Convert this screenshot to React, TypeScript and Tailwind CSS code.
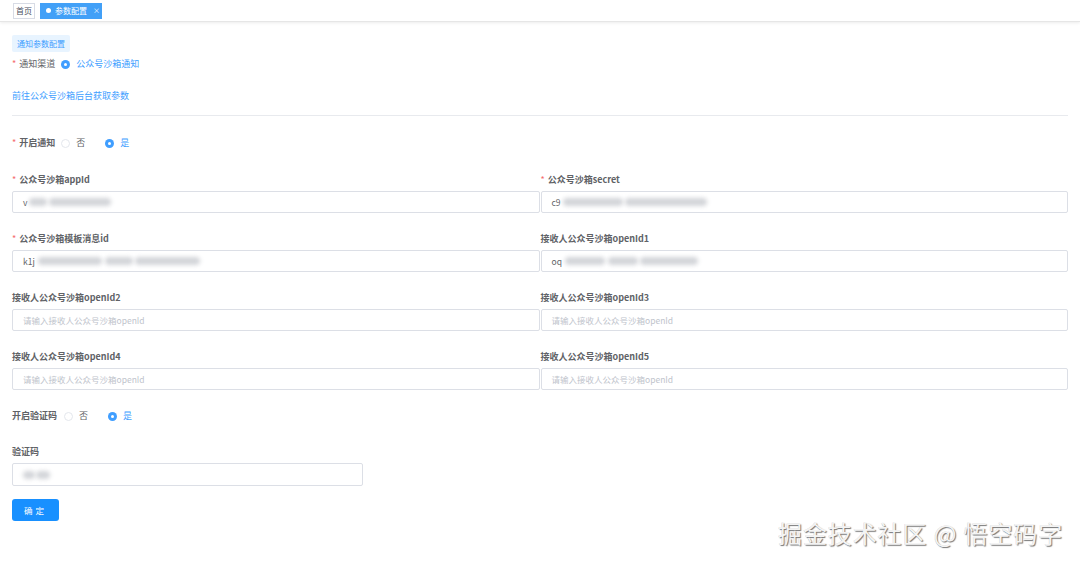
import React from "react";

const font = { fontFamily: '"Noto Sans CJK SC", "Noto Sans", sans-serif' };

function Radio({ checked, label }: { checked?: boolean; label: string }) {
  return (
    <span className="flex items-center">
      {checked ? (
        <span className="flex h-[9px] w-[9px] items-center justify-center rounded-full bg-[#409eff]">
          <span className="h-[3px] w-[3px] rounded-full bg-white" />
        </span>
      ) : (
        <span className="h-[9px] w-[9px] rounded-full border border-[#e4e7ed] bg-white" />
      )}
      <span className={`ml-[6px] text-[9px] ${checked ? "text-[#409eff]" : "text-[#606266]"}`}>{label}</span>
    </span>
  );
}

function Star() {
  return <span className="mr-[3px] text-[9px] text-[#f56c6c]">*</span>;
}

function Blur({ w, ml = 0 }: { w: number; ml?: number }) {
  return (
    <span
      className="inline-block h-[8px] rounded-sm bg-[#d3d5d9] blur-[2px]"
      style={{ width: w, marginLeft: ml }}
    />
  );
}

type Field = {
  label: string;
  required?: boolean;
  prefix?: string;
  blur?: { w: number; ml?: number }[];
  placeholder?: string;
};

function FormField({ f }: { f: Field }) {
  return (
    <div className="flex flex-col">
      <div className="flex h-[12px] items-center">
        {f.required && <Star />}
        <span className="text-[9px] font-bold text-[#606266]">{f.label}</span>
      </div>
      <div className="mt-[5px] flex h-[22px] w-full items-center rounded-[2px] border border-[#dcdfe6] bg-white px-[10px]">
        {f.placeholder ? (
          <span className="text-[8.5px] text-[#c0c4cc]">{f.placeholder}</span>
        ) : (
          <span className="flex items-center">
            <span className="text-[8.5px] text-[#606266]">{f.prefix}</span>
            {f.blur?.map((b, i) => (
              <Blur key={i} w={b.w} ml={b.ml ?? 0} />
            ))}
          </span>
        )}
      </div>
    </div>
  );
}

const ph = "请输入接收人公众号沙箱openId";

const rows: [Field, Field][] = [
  [
    { label: "公众号沙箱appId", required: true, prefix: "v", blur: [{ w: 18, ml: 2 }, { w: 62, ml: 2 }] },
    { label: "公众号沙箱secret", required: true, prefix: "c9", blur: [{ w: 60, ml: 2 }, { w: 82, ml: 2 }] },
  ],
  [
    { label: "公众号沙箱模板消息id", required: true, prefix: "k1j", blur: [{ w: 64, ml: 3 }, { w: 28, ml: 3 }, { w: 65, ml: 2 }] },
    { label: "接收人公众号沙箱openId1", prefix: "oq", blur: [{ w: 40, ml: 3 }, { w: 30, ml: 3 }, { w: 58, ml: 2 }] },
  ],
  [
    { label: "接收人公众号沙箱openId2", placeholder: ph },
    { label: "接收人公众号沙箱openId3", placeholder: ph },
  ],
  [
    { label: "接收人公众号沙箱openId4", placeholder: ph },
    { label: "接收人公众号沙箱openId5", placeholder: ph },
  ],
];

export default function App() {
  return (
    <div className="relative h-[562px] w-[1080px] overflow-hidden bg-white" style={font}>
      {/* tag bar */}
      <div className="flex h-[22px] items-center gap-[5px] border-b border-[#e6e6e6] bg-white pl-[13px] shadow-[0_1px_3px_rgba(0,0,0,0.08)]">
        <div className="flex h-[16px] w-[22px] items-center justify-center border border-[#d8dce5] text-[8px] text-[#495060]">
          首页
        </div>
        <div className="flex h-[16px] w-[62px] items-center bg-[#42a0f7] pl-[6px] text-[8px] text-white">
          <span className="h-[5px] w-[5px] rounded-full bg-white" />
          <span className="ml-[4px]">参数配置</span>
          <span className="ml-[6px] text-[7px]">×</span>
        </div>
      </div>

      <div className="px-[12px]">
        <div className="mt-[13px] flex h-[17px] w-[58px] items-center justify-center rounded-[2px] bg-[#e8f4ff] text-[8px] text-[#409eff]">
          通知参数配置
        </div>

        <div className="mt-[5px] flex h-[14px] items-center">
          <Star />
          <span className="text-[9px] text-[#606266]">通知渠道</span>
          <span className="ml-[6px]">
            <Radio checked label="公众号沙箱通知" />
          </span>
        </div>

        <div className="mt-[19px] flex h-[12px] items-center text-[9px] text-[#409eff]">前往公众号沙箱后台获取参数</div>

        <div className="mt-[13px] h-px w-full bg-[#e8eaee]" />

        <div className="mt-[21px] flex h-[12px] items-center">
          <Star />
          <span className="text-[9px] font-bold text-[#606266]">开启通知</span>
          <span className="ml-[6px] flex items-center gap-[20px]">
            <Radio label="否" />
            <Radio checked label="是" />
          </span>
        </div>

        <div className="mt-[25px] flex flex-col gap-[20px]">
          {rows.map((r, i) => (
            <div key={i} className="grid grid-cols-2 gap-x-px">
              <FormField f={r[0]} />
              <FormField f={r[1]} />
            </div>
          ))}
        </div>

        <div className="mt-[20px] flex h-[12px] items-center">
          <span className="text-[9px] font-bold text-[#606266]">开启验证码</span>
          <span className="ml-[7px] flex items-center gap-[20px]">
            <Radio label="否" />
            <Radio checked label="是" />
          </span>
        </div>

        <div className="mt-[24px] flex h-[12px] items-center">
          <span className="text-[9px] font-bold text-[#606266]">验证码</span>
        </div>
        <div className="mt-[5px] flex h-[23px] w-[351px] items-center rounded-[2px] border border-[#dcdfe6] bg-white px-[10px]">
          <Blur w={12} />
          <Blur w={14} ml={1} />
        </div>

        <button className="mt-[13px] flex h-[22px] w-[47px] items-center justify-center rounded-[3px] bg-[#1890ff] text-[8.5px] tracking-[3px] text-white">
          确定
        </button>
      </div>

      {/* watermark */}
      <div className="absolute left-[778px] top-[515px] text-[24px] tracking-[0.9px] text-[#f4f4f4] [text-shadow:1px_1px_1px_rgba(0,0,0,0.55),-0.5px_-0.5px_0_rgba(0,0,0,0.15)]">
        掘金技术社区 @ 悟空码字
      </div>
    </div>
  );
}
